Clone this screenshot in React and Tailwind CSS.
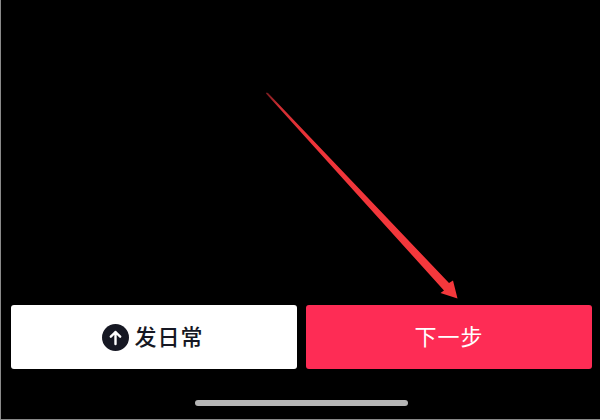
import React from "react";

const cjk = { fontFamily: '"Noto Sans CJK SC", sans-serif' };

export default function App() {
  return (
    <div
      className="relative w-[600px] h-[420px] bg-black flex flex-col justify-end overflow-hidden border-l border-b border-[#8a8a8a]"
      style={cjk}
    >
      {/* Buttons */}
      <div className="grid grid-cols-2 gap-[9px] pl-[10px] pr-[8px]">
        <button className="h-[64px] bg-white rounded-[3px] flex items-center justify-center gap-[5px] pr-[2px] text-[#161823] text-[22px] tracking-[1px] font-medium">
          <svg width="27" height="27" viewBox="0 0 27 27">
            <circle cx="13.5" cy="13.5" r="13.5" fill="#161823" />
            <path
              d="M13.5 20V8M8.8 12.7l4.7-4.7 4.7 4.7"
              fill="none"
              stroke="#fff"
              strokeWidth="2.4"
              strokeLinecap="round"
              strokeLinejoin="round"
            />
          </svg>
          <span className="pb-[3px]">发日常</span>
        </button>
        <button className="h-[64px] bg-[#fe2c55] rounded-[3px] flex items-center justify-center text-white text-[22px] tracking-[1px]">
          <span className="pb-[3px]">下一步</span>
        </button>
      </div>

      {/* Home bar */}
      <div className="flex justify-center mt-[31px] mb-[13px] pl-[2px]">
        <div className="w-[213px] h-[6px] rounded-full bg-[#b5b5b5]" />
      </div>

      {/* Annotation arrow */}
      <svg
        className="absolute left-[-1px] top-0"
        width="600"
        height="420"
        viewBox="0 0 600 420"
      >
        <defs>
          <linearGradient id="shaft" gradientUnits="userSpaceOnUse" x1="267" y1="93" x2="420" y2="260">
            <stop offset="0" stopColor="#7a1c20" />
            <stop offset="0.08" stopColor="#d02e33" />
            <stop offset="0.3" stopColor="#ee3439" />
            <stop offset="1" stopColor="#f4383c" />
          </linearGradient>
        </defs>
        <path
          d="M266.5 92.5 L268 93 L449 283 L453 280.5 L457.5 298.5 L440.5 293 L444 290.5 L266 93.5 Z"
          fill="url(#shaft)"
        />
      </svg>
    </div>
  );
}
